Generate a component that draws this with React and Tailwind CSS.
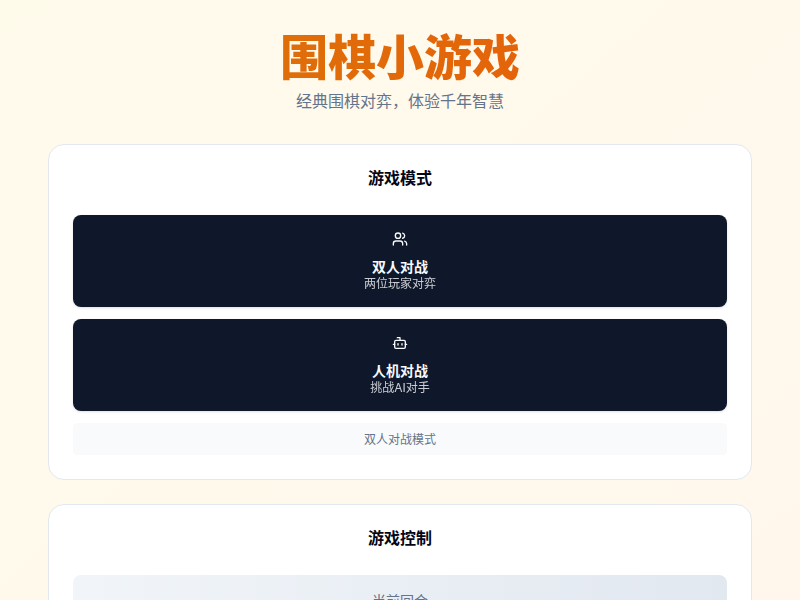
import { Bot, Users } from "lucide-react";

const FONT = "font-['Inter','Noto_Sans_CJK_SC',sans-serif]";

function ModeButton({ icon: Icon, title, desc }) {
  return (
    <button
      type="button"
      className="flex h-[92px] w-full flex-col items-center rounded-lg bg-[#0f172a] pt-4 text-[#f8fafc] shadow-sm"
    >
      <Icon className="mb-[11px] h-4 w-4" />
      <span className="text-sm leading-[18px] font-bold">{title}</span>
      <span className="text-xs leading-4 opacity-80">{desc}</span>
    </button>
  );
}

export default function App() {
  return (
    <div className={`${FONT} min-h-screen bg-gradient-to-br from-[#fffbeb] to-[#fff7ed] px-12 pt-8 pb-8`}>
      <header className="mb-[31px] text-center">
        <h1 className="mb-[5px] bg-gradient-to-r from-[#d97706] to-[#ea580c] bg-clip-text text-5xl leading-[52px] font-extrabold text-transparent">
          围棋小游戏
        </h1>
        <p className="text-base leading-6 text-[#64748b]">经典围棋对弈，体验千年智慧</p>
      </header>

      <section className="mb-6 rounded-2xl border border-[#e2e8f0] bg-white p-6">
        <h2 className="mb-7 text-center text-base leading-[18px] font-semibold text-[#020617]">游戏模式</h2>
        <div className="flex flex-col gap-3">
          <ModeButton icon={Users} title="双人对战" desc="两位玩家对弈" />
          <ModeButton icon={Bot} title="人机对战" desc="挑战AI对手" />
          <div className="flex h-8 items-center justify-center rounded bg-[#f8fafc] pt-px text-xs text-[#64748b]">
            双人对战模式
          </div>
        </div>
      </section>

      <section className="rounded-2xl border border-[#e2e8f0] bg-white p-6">
        <h2 className="mb-7 text-center text-base leading-[18px] font-semibold text-[#020617]">游戏控制</h2>
        <div className="rounded-lg bg-gradient-to-r from-[#f1f5f9] to-[#e2e8f0] p-4 text-center">
          <p className="text-sm text-[#64748b]">当前回合</p>
          <p className="text-base font-bold text-[#0f172a]">黑棋</p>
        </div>
      </section>
    </div>
  );
}
